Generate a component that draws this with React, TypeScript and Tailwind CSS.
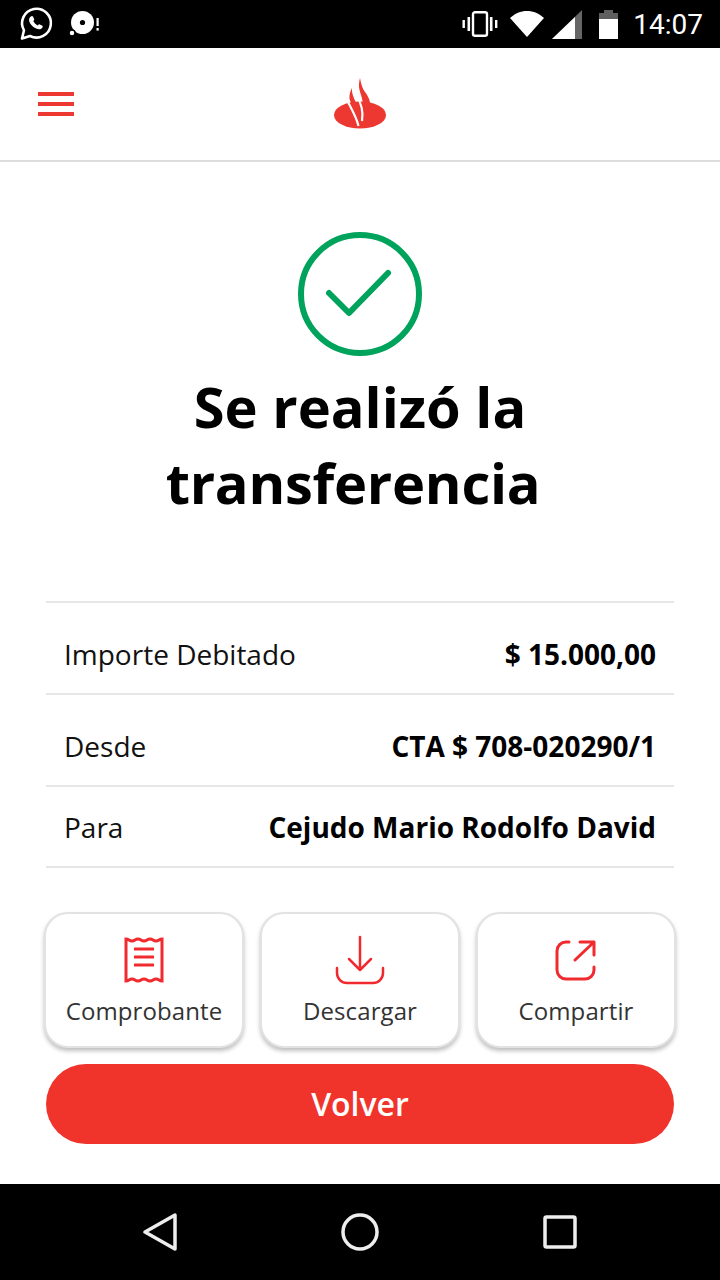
import React from "react";

const rows = [
  { label: "Importe Debitado", value: "$ 15.000,00", h: "h-[92px] pt-[11px]" },
  { label: "Desde", value: "CTA $ 708-020290/1", h: "h-[92px] pt-[11px]" },
  { label: "Para", value: "Cejudo Mario Rodolfo David", h: "h-[81px] pt-[1px]" },
];

const StatusBar = () => (
  <div className="flex h-12 items-center justify-between bg-black text-white">
    <div className="flex items-center">
      <svg width="36" height="36" viewBox="0 0 36 36" className="ml-[18px]" fill="none">
        <path
          d="M4 32.5l2-8.2A14.4 14.4 0 1 1 12 30z"
          stroke="#fff"
          strokeWidth="2.6"
          strokeLinejoin="round"
        />
        <path
          d="M12.6 10.8c1-1 2-.9 2.5 0l1 2.1c.3.6.1 1.1-.8 2.2.8 1.8 2.3 3.3 4.4 4.3 1-1.1 1.5-1.4 2.1-1l2.2 1.2c.9.5 1 1.3.1 2.4-1.3 1.5-3.4 1.7-6 .5-3.4-1.5-5.7-4-6.8-7-.5-1.8-.1-3.3.8-4.4z"
          fill="#fff"
        />
      </svg>
      <svg width="34" height="28" viewBox="0 0 34 28" className="ml-[14px]">
        <circle cx="14.500" cy="12.500" r="11.500" fill="#fff" />
        <circle cx="14.500" cy="12.500" r="2.600" fill="#000" />
        <circle cx="4" cy="23" r="3" fill="#fff" stroke="#000" strokeWidth="1.500" />
        <rect x="28.500" y="8" width="2.200" height="8" fill="#fff" />
        <rect x="28.500" y="18" width="2.200" height="2.600" fill="#fff" />
      </svg>
    </div>
    <div className="flex items-center pr-[17px]">
      <svg width="36" height="26" viewBox="0 0 36 26" fill="none">
        <rect x="11" y="1.200" width="14" height="23.600" rx="2" stroke="#fff" strokeWidth="2.400" />
        <rect x="5.500" y="6" width="2.600" height="14" fill="#fff" />
        <rect x="0.500" y="9" width="2.400" height="8" fill="#fff" />
        <rect x="27.900" y="6" width="2.600" height="14" fill="#fff" />
        <rect x="33" y="9" width="2.400" height="8" fill="#fff" />
      </svg>
      <svg width="34" height="26" viewBox="0 0 34 26" className="ml-3">
        <path d="M0 7C5 2.500 10.500 0 17 0s12 2.500 17 7L17 26z" fill="#fff" />
      </svg>
      <svg width="30" height="29" viewBox="0 0 30 29" className="ml-2">
        <path d="M0 29L30 0v29z" fill="#666" />
        <path d="M0 29L23 7v22z" fill="#fff" />
      </svg>
      <svg width="19" height="29" viewBox="0 0 19 29" className="ml-[17px]">
        <path d="M0 3h5V0h9v3h5v6H0z" fill="#5f5f5f" />
        <rect x="0" y="9" width="19" height="20" fill="#fff" />
      </svg>
      <span className="ml-[15px] pt-[2px] font-['Roboto',sans-serif] text-[28px] leading-none">14:07</span>
    </div>
  </div>
);

const Header = () => (
  <header className="grid h-[114px] grid-cols-3 items-center border-b-2 border-[#dcdcdc] bg-white px-[38px]">
    <div className="flex w-[36px] flex-col gap-[6px]">
      <span className="h-1 bg-[#ec3830]" />
      <span className="h-1 bg-[#ec3830]" />
      <span className="h-1 bg-[#ec3830]" />
    </div>
    <svg width="54" height="52" viewBox="0 0 54 52" className="mb-[2px] justify-self-center">
      <ellipse cx="27" cy="38" rx="26" ry="13.500" fill="#ec3830" />
      <path d="M27 1C26 5 25.500 9 26.500 13 28 19 32 27 30 42L37 30C38 24 35 19 32 15 29.500 11.500 28 7 27 1z" fill="#ec3830" />
      <path d="M18.700 11C17.500 14 16 18 16.500 22 18.500 28 24 38 26 46 27.500 40 27.500 33 24.500 28 21.500 23 19 18 18.700 11z" fill="#ec3830" />
      <path d="M14.500 24c3.500 7 9 16 11 25" fill="none" stroke="#fff" strokeWidth="2.200" />
      <path d="M23 18c4 6 8 14 6 26" fill="none" stroke="#fff" strokeWidth="2.200" />
    </svg>
  </header>
);

const ReceiptIcon = () => (
  <svg width="42" height="48" viewBox="0 0 42 48" fill="none" stroke="#f02a2e" strokeWidth="3">
    <path d="M3 3c3 0 3 2 6 2s3-2 6-2 3 2 6 2 3-2 6-2 3 2 6 2 3-2 6-2v42c-3 0-3-2-6-2s-3 2-6 2-3-2-6-2-3 2-6 2-3-2-6-2-3 2-6 2z" />
    <path d="M11 13h20M11 21h20M11 29h20" />
  </svg>
);

const DownloadIcon = () => (
  <svg width="50" height="50" viewBox="0 0 50 50" fill="none" stroke="#f02a2e" strokeWidth="2.500" strokeLinecap="round" strokeLinejoin="round">
    <path d="M25 2v33M14 24l11 11 11-11" />
    <path d="M2 33v5a10 10 0 0 0 10 10h26a10 10 0 0 0 10-10v-5" />
  </svg>
);

const ShareIcon = () => (
  <svg width="42" height="42" viewBox="0 0 42 42" fill="none" stroke="#f02a2e" strokeWidth="3" strokeLinecap="round" strokeLinejoin="round">
    <path d="M14 3H11a9 9 0 0 0-9 9v19a9 9 0 0 0 9 9h19a9 9 0 0 0 9-9v-3" />
    <path d="M20 21L39 3M25 3h14v13" />
  </svg>
);

const actions = [
  { label: "Comprobante", icon: <ReceiptIcon /> },
  { label: "Descargar", icon: <DownloadIcon /> },
  { label: "Compartir", icon: <ShareIcon /> },
];

export default function App() {
  return (
    <div className="flex h-[1280px] w-[720px] flex-col overflow-hidden bg-white font-['Open_Sans',sans-serif]">
      <StatusBar />
      <Header />
      <main className="flex flex-1 flex-col items-center">
        <svg width="124" height="124" viewBox="0 0 124 124" fill="none" className="mt-[70px]">
          <circle cx="62" cy="62" r="59" stroke="#00a35c" strokeWidth="6" />
          <path d="M31 61l20 20 39-40" stroke="#00a35c" strokeWidth="6" strokeLinecap="round" strokeLinejoin="round" />
        </svg>
        <h1 className="mt-3 text-center text-[56px] font-bold leading-[76px] text-black">
          Se realizó la
          <br />
          <span className="inline-block pr-[14px] tracking-[-0.25px]">transferencia</span>
        </h1>
        <div className="mt-[81px] w-[628px] border-t-2 border-[#e6e6e6]">
          {rows.map((r) => (
            <div key={r.label} className={`flex items-center justify-between border-b-2 border-[#e6e6e6] px-[18px] ${r.h}`}>
              <span className="text-[28px] text-[#111]">{r.label}</span>
              <span className="text-[28px] font-bold text-black">{r.value}</span>
            </div>
          ))}
        </div>
        <div className="mt-[44px] flex w-[632px] gap-4">
          {actions.map((a) => (
            <button
              key={a.label}
              className="flex h-[136px] w-[200px] flex-col items-center rounded-[24px] border-2 border-[#e2e2e2] bg-white shadow-[0_3px_4px_rgba(0,0,0,0.25)]"
            >
              <span className="flex h-[72px] items-center pt-[20px]">{a.icon}</span>
              <span className="mt-[9px] text-[24px] leading-8 tracking-[0.1px] text-[#333]">{a.label}</span>
            </button>
          ))}
        </div>
        <button className="mt-4 flex h-20 w-[628px] items-center justify-center rounded-full bg-[#f0332b] text-[32px] font-semibold text-white">
          Volver
        </button>
      </main>
      <nav className="grid h-24 grid-cols-3 items-center justify-items-center bg-black px-[60px]">
        <svg width="34" height="38" viewBox="0 0 34 38" fill="none">
          <path d="M32 2v34L2 19z" stroke="#eee" strokeWidth="3.500" strokeLinejoin="round" />
        </svg>
        <svg width="38" height="38" viewBox="0 0 38 38" fill="none">
          <circle cx="19" cy="19" r="17" stroke="#eee" strokeWidth="3.500" />
        </svg>
        <svg width="34" height="34" viewBox="0 0 34 34" fill="none">
          <rect x="2" y="2" width="30" height="30" rx="1.500" stroke="#eee" strokeWidth="3.500" />
        </svg>
      </nav>
    </div>
  );
}
